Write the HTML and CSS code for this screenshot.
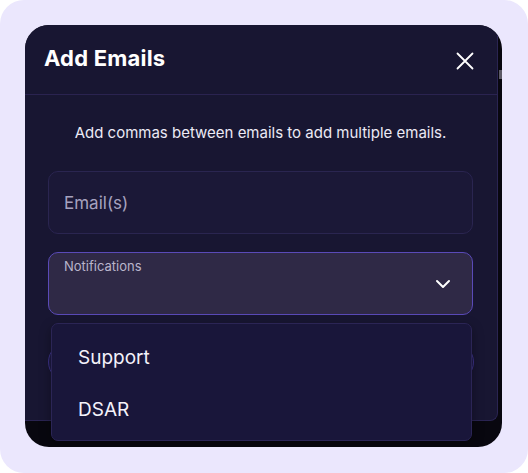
FILE: index.html
```html
<!DOCTYPE html>
<html lang="en">
<head>
    <meta charset="UTF-8">
    <title>Add Emails</title>
    <link rel="stylesheet" href="styles.css">
</head>
<body>
    <div class="frame">
        <div class="modal">
            <div class="panel">
                <div class="modal-header">
                    <h1>Add Emails</h1>
                    <button class="close-btn" aria-label="Close">
                        <svg width="18" height="18" viewBox="0 0 18 18" fill="none" stroke="#ffffff" stroke-width="1.8" stroke-linecap="round">
                            <path d="M1.5 1.5 L16.5 16.5 M16.5 1.5 L1.5 16.5"/>
                        </svg>
                    </button>
                </div>
                <div class="modal-body">
                    <p class="hint">Add commas between emails to add multiple emails.</p>
                    <div class="field">
                        <span class="placeholder">Email(s)</span>
                    </div>
                    <div class="field select">
                        <span class="select-label">Notifications</span>
                        <svg class="chevron" width="16" height="10" viewBox="0 0 16 10" fill="none" stroke="#ffffff" stroke-width="2" stroke-linecap="round" stroke-linejoin="round">
                            <path d="M2 2 L8 8 L14 2"/>
                        </svg>
                    </div>
                    <button class="submit-btn">Add</button>
                </div>
            </div>
            <span class="scroll-thumb"></span>
            <ul class="menu">
                <li>Support</li>
                <li>DSAR</li>
            </ul>
        </div>
    </div>
</body>
</html>
```
FILE: styles.css
```css
* {
    margin: 0;
    padding: 0;
    box-sizing: border-box;
    font-family: Inter, "Noto Sans", sans-serif;
}

body {
    background-color: #ffffff;
}

.frame {
    width: 528px;
    height: 473px;
    padding: 25px 26px 26px 25px;
    background-color: #ebe7fd;
    border-radius: 24px;
}

.modal {
    position: relative;
    width: 477px;
    height: 422px;
    background-color: #08070f;
    border-radius: 24px;
    overflow: hidden;
}

.panel {
    width: 473px;
    height: 396px;
    background-color: #181632;
    border-bottom: 1px solid #2a2452;
    border-right: 1px solid #2a2452;
    border-bottom-right-radius: 8px;
    overflow: hidden;
}

.modal-header {
    display: flex;
    align-items: center;
    justify-content: space-between;
    height: 70px;
    padding: 0 23px 0 19px;
    border-bottom: 1px solid #2a2350;
}

.modal-header h1 {
    font-size: 22px;
    font-weight: 700;
    letter-spacing: 0.2px;
    color: #ffffff;
    margin-top: -3px;
}

.close-btn {
    background: none;
    border: none;
    display: flex;
    margin-top: 2px;
}

.modal-body {
    padding: 28px 24px 0 23px;
}

.hint {
    text-align: center;
    font-size: 15px;
    color: #eceaf5;
    line-height: 20px;
    margin-bottom: 28px;
}

.field {
    position: relative;
    height: 63px;
    display: flex;
    align-items: center;
    padding: 0 15px;
    background-color: #1b1837;
    border: 1px solid #2a2550;
    border-radius: 10px;
    margin-bottom: 18px;
}

.placeholder {
    font-size: 17px;
    color: #a6a2bf;
}

.select {
    background-color: #2f2946;
    border-color: #5a4ab8;
    margin-bottom: 27px;
}

.select-label {
    position: absolute;
    left: 15px;
    top: 5px;
    font-size: 13px;
    color: #b9b5cb;
}

.chevron {
    position: absolute;
    right: 21px;
    top: 26px;
}

.submit-btn {
    display: block;
    width: 426px;
    height: 40px;
    background-color: #1d1a42;
    border: 1px solid #3c3288;
    border-radius: 20px;
    color: #ffffff;
    font-size: 15px;
}

.scroll-thumb {
    position: absolute;
    right: 0;
    top: 45px;
    width: 3px;
    height: 9px;
    background-color: #5c5a66;
}

.menu {
    position: absolute;
    left: 26px;
    top: 298px;
    width: 421px;
    height: 118px;
    list-style: none;
    background-color: #19163a;
    border: 1px solid #2b2555;
    border-radius: 7px;
    padding-top: 7px;
    box-shadow: 0 4px 12px rgba(0, 0, 0, 0.35);
}

.menu li {
    height: 52px;
    display: flex;
    align-items: center;
    padding-left: 26px;
    font-size: 19px;
    color: #f4f2fa;
}
```
